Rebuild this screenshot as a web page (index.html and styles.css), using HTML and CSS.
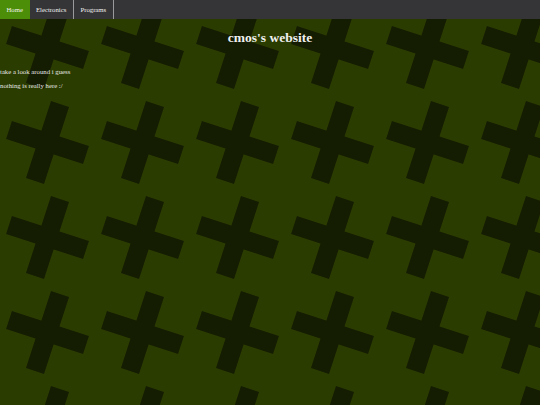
FILE: index.html
```html
<!DOCTYPE html>
<html lang="en">
  <head>
    <meta charset="UTF-8" />
    <meta name="viewport" content="width=device-width, initial-scale=1.0" />
    <title>cmos's website</title>
    <link rel="stylesheet" href="styles.css">
  </head>
  <body>
    <ul class="topnav">
      <li><a class="active" href="#">Home</a></li>
      <li><a href="#">Electronics</a></li>
      <li><a href="#">Programs</a></li>
    </ul>
    <h1>cmos's website</h1>
    <div class="content">
      <p>take a look around i guess</p>
      <p>nothing is really here :/</p>
    </div>
  </body>
</html>
```

FILE: styles.css
```css
body {
  margin: 0;
  font-family: "Liberation Serif", "Times New Roman", serif;
  font-size: 6.75px;
  color: #e6e6e6;
  min-height: 100vh;
  background-color: #2b3c00;
  /* tiled crosses, tilted */
  background-image: url("data:image/svg+xml,%3Csvg xmlns='http://www.w3.org/2000/svg' width='95' height='95'%3E%3Cg transform='translate(47.5 47.5) rotate(18)' fill='%23141c01'%3E%3Crect x='-40.5' y='-9.5' width='81' height='19'/%3E%3Crect x='-9.5' y='-40.5' width='19' height='81'/%3E%3C/g%3E%3C/svg%3E");
  background-size: 95px 95px;
  background-position: 0 0;
}

.topnav {
  list-style: none;
  margin: 0;
  padding: 0;
  display: flex;
  background-color: #353537;
}

.topnav li {
  border-right: 1px solid #9a9a9a;
}

.topnav li a {
  display: block;
  padding: 6px 6.5px;
  line-height: 7px;
  color: #f2f2f2;
  text-decoration: none;
}

.topnav li a.active {
  background-color: #4c8e07;
}

.topnav li:first-child {
  border-right: none;
}

h1 {
  margin: 11px 0 0;
  font-size: 13.5px;
  line-height: 16px;
  text-align: center;
  color: #f0f0f0;
}

.content {
  margin-top: 22px;
}

.content p {
  margin: 0 0 6.5px;
  line-height: 7.8px;
}
```
